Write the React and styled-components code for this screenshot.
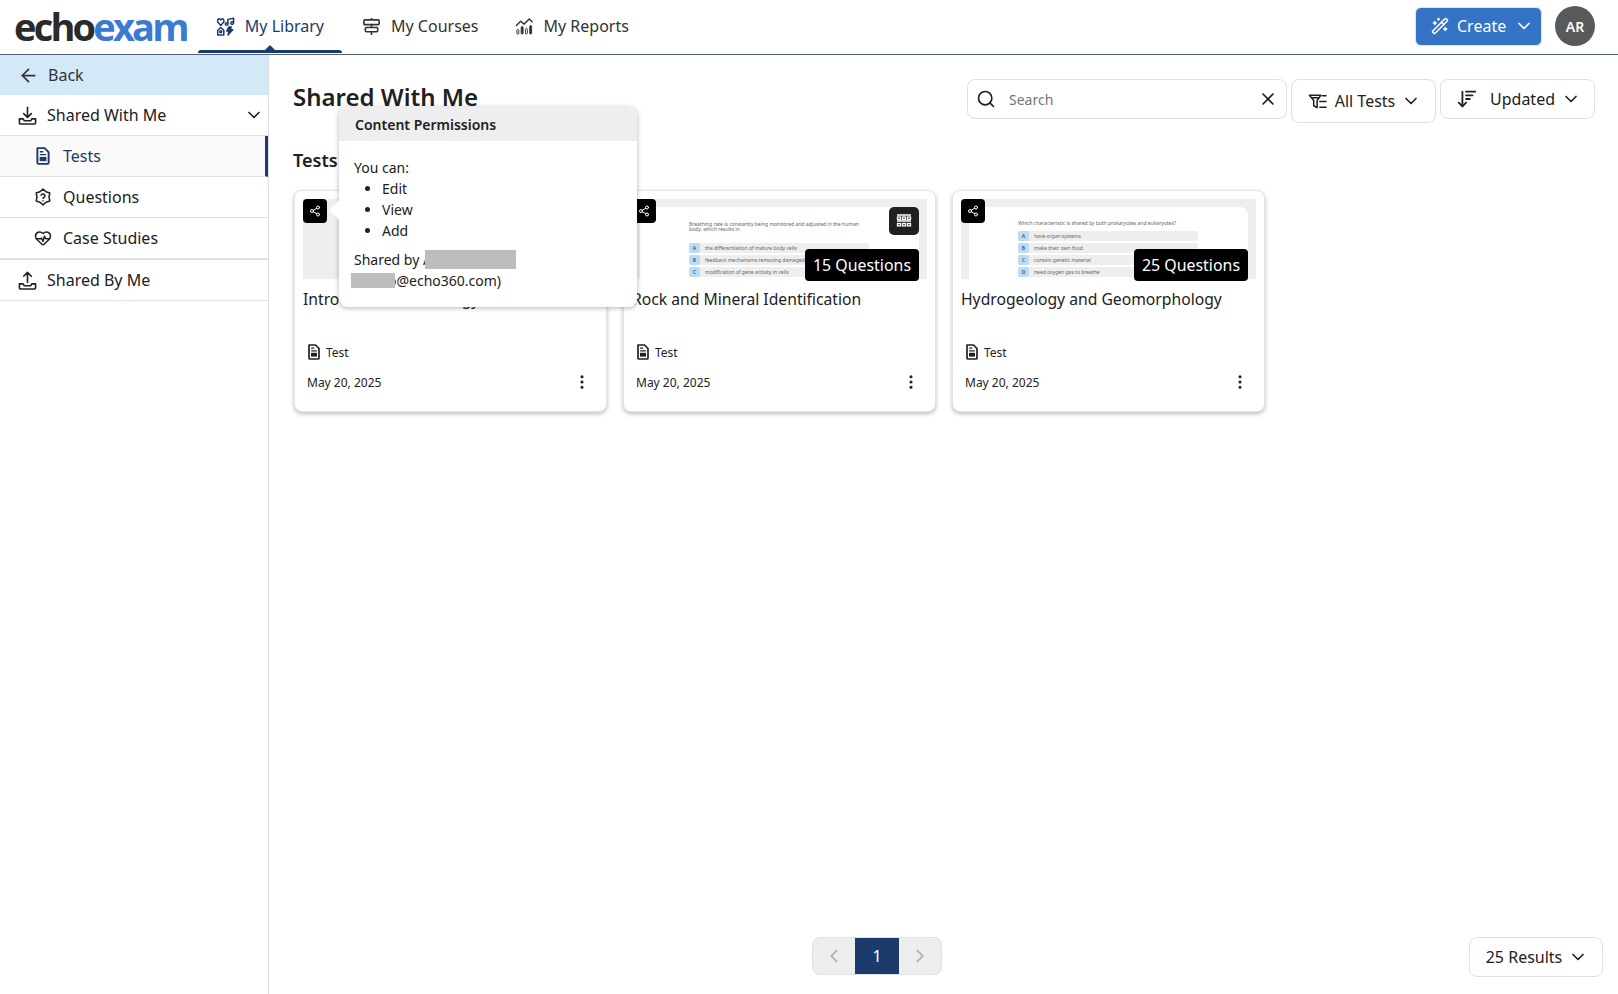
import React from "react";
import styled, { createGlobalStyle } from "styled-components";
import {
  ArrowLeft,
  ChevronDown,
  ChevronLeft,
  ChevronRight,
  Search,
  X,
  WandSparkles,
  ArrowDownWideNarrow,
  HeartPulse,
  Share2,
  EllipsisVertical,
} from "lucide-react";

const GlobalStyle = createGlobalStyle`
  html, body {
    margin: 0;
    padding: 0;
    background: #fff;
    color: #212121;
    font-family: "Noto Sans", "Open Sans", sans-serif;
  }
  * { box-sizing: border-box; }
`;

const navy = "#1a3b6b";

// ---------------------- icons ----------------------
const LibraryIcon = () => (
  <svg width="19" height="19" viewBox="0 0 20 20" fill="none" stroke="currentColor" strokeWidth="1.6" strokeLinejoin="round" strokeLinecap="round">
    <path d="M5 9 2 5.6C.9 4 2.2 1.8 3.7 2c.6 0 1 .4 1.3.9.3-.5.8-.9 1.4-.9C8 1.8 9 4 8 5.6z" />
    <path d="M12.5 7V2.5l6-1.2V6" />
    <circle cx="11.2" cy="7.4" r="1.4" />
    <circle cx="17" cy="6.4" r="1.4" />
    <path d="M1.8 14 5 11l3.2 3v5H1.8z" />
    <circle cx="5" cy="15.6" r="1" />
    <path d="M16 10.5h-2.6l-2 4.2h2.4l-1.2 4.3 5-5.6h-2.6z" fill="currentColor" />
  </svg>
);

const CoursesIcon = () => (
  <svg width="19" height="19" viewBox="0 0 20 20" fill="none" stroke="currentColor" strokeWidth="1.7" strokeLinejoin="round">
    <rect x="2" y="3" width="16" height="5" rx="1" />
    <rect x="3.5" y="11" width="13" height="4.5" rx="1" />
    <path d="M10 1v2M10 8v3M10 15.5V19" />
  </svg>
);

const ReportsIcon = () => (
  <svg width="19" height="19" viewBox="0 0 20 20" fill="currentColor" stroke="currentColor" strokeWidth="1" strokeLinejoin="round">
    <path d="M1.5 9 6 4.5l3.5 3L15 2l3 3" fill="none" strokeWidth="1.5" strokeLinecap="round" />
    <rect x="2" y="13" width="2" height="5" rx="1" fill="none" />
    <rect x="6.5" y="10" width="2" height="8" rx="1" />
    <rect x="11" y="12" width="2" height="6" rx="1" fill="none" />
    <rect x="15.5" y="9" width="2" height="9" rx="1" />
  </svg>
);

const FilterListIcon = () => (
  <svg width="19" height="19" viewBox="0 0 20 20" fill="none" stroke="currentColor" strokeWidth="1.6" strokeLinejoin="round" strokeLinecap="round">
    <path d="M1.5 3.5h12L9.6 9v7.5L6 14.5V9zM4 6h7" />
    <path d="M15 4h4M12.5 10H19M12.5 16H19" />
  </svg>
);

const TrayDownIcon = () => (
  <svg width="19" height="19" viewBox="0 0 20 20" fill="none" stroke="currentColor" strokeWidth="1.7" strokeLinejoin="round" strokeLinecap="round">
    <path d="M10 1.5v10M6 8l4 4 4-4" />
    <path d="M1.5 13.5h4l1 2h7l1-2h4V18a1 1 0 0 1-1 1h-15a1 1 0 0 1-1-1z" />
  </svg>
);

const TrayUpIcon = () => (
  <svg width="19" height="19" viewBox="0 0 20 20" fill="none" stroke="currentColor" strokeWidth="1.7" strokeLinejoin="round" strokeLinecap="round">
    <path d="M10 12V1.5M6 5.5l4-4 4 4" />
    <path d="M1.5 13.5h4l1 2h7l1-2h4V18a1 1 0 0 1-1 1h-15a1 1 0 0 1-1-1z" />
  </svg>
);

const DocIcon = ({ size = 16 }) => (
  <svg width={size} height={size} viewBox="0 0 16 16" fill="none" stroke="currentColor" strokeWidth="1.7" strokeLinejoin="round">
    <path d="M3 1h6.5L13 4.5V14a1 1 0 0 1-1 1H4a1 1 0 0 1-1-1z" />
    <path d="M5.2 4.2h3M5.2 6.8h5.6" strokeWidth="1.2" />
    <rect x="5" y="8.8" width="6" height="3.8" fill="currentColor" stroke="none" />
  </svg>
);

const QuestionBadgeIcon = () => (
  <svg width="18" height="18" viewBox="0 0 24 24" fill="none" stroke="currentColor" strokeWidth="2" strokeLinecap="round" strokeLinejoin="round">
    <path d="M12 1.5 16 5.07l5.09 1.68L20 12l1.09 5.25L16 18.93 12 22.5l-4-3.57-5.09-1.68L4 12 2.91 6.75 8 5.07z" />
    <path d="M9.4 9.6a2.7 2.7 0 0 1 5.2.9c0 1.8-2.6 2.2-2.6 3.4" />
    <path d="M12 17h.01" />
  </svg>
);

const AbacusIcon = () => (
  <svg width="16" height="16" viewBox="0 0 16 16" fill="none" stroke="#fff" strokeWidth="1.3">
    <path d="M1 2h14M1 8h14" />
    <rect x="1.5" y="4" width="3" height="2.4" />
    <rect x="6.5" y="4" width="3" height="2.4" />
    <rect x="11.5" y="4" width="3" height="2.4" />
    <rect x="1.5" y="10.5" width="3" height="2.4" />
    <rect x="6.5" y="10.5" width="3" height="2.4" />
    <rect x="11.5" y="10.5" width="3" height="2.4" />
  </svg>
);

// ---------------------- header ----------------------
const Page = styled.div`
  display: flex;
  flex-direction: column;
  height: 100vh;
  overflow: hidden;
`;

const Header = styled.header`
  display: flex;
  align-items: center;
  flex: none;
  height: 55px;
  padding: 0 23px 2px 14px;
  border-bottom: 1px solid #4d607f;
`;

const Logo = styled.div`
  flex: none;
  margin-right: 11px;
  font-family: "Open Sans", sans-serif;
  font-size: 38px;
  font-weight: 700;
  letter-spacing: -2.8px;
  line-height: 52px;
  color: #2b2a2b;
  white-space: nowrap;

  span {
    color: #3b7ad2;
  }
`;

const Tab = styled.a`
  position: relative;
  display: flex;
  align-items: center;
  gap: 10px;
  height: 52px;
  margin-right: ${(p) => (p.$active ? "2px" : "0")};
  padding: 0 18px;
  font-size: 16px;
  color: ${(p) => (p.$active ? navy : "#333")};

  ${(p) =>
    p.$active &&
    `
    &::after {
      content: "";
      position: absolute;
      left: 0;
      right: 0;
      bottom: -1px;
      height: 3px;
      border-radius: 3px 3px 0 0;
      background: ${navy};
    }
    &::before {
      content: "";
      position: absolute;
      left: 50%;
      bottom: 1px;
      margin-left: -6px;
      border: 6px solid transparent;
      border-top: 0;
      border-bottom-color: ${navy};
    }
  `}
`;

const HeaderRight = styled.div`
  display: flex;
  align-items: center;
  gap: 13px;
  margin-left: auto;
`;

const CreateButton = styled.button`
  display: flex;
  align-items: center;
  gap: 8px;
  width: 127px;
  height: 39px;
  padding: 0 0 0 15px;
  border: 1px solid #dbe6f5;
  border-radius: 6px;
  background: #3573c7;
  color: #fff;
  font: 16px "Noto Sans", sans-serif;
`;

const Avatar = styled.div`
  display: flex;
  align-items: center;
  justify-content: center;
  width: 40px;
  height: 40px;
  border-radius: 50%;
  background: #58595b;
  color: #fff;
  font-size: 14px;
  font-weight: 600;
`;

// ---------------------- sidebar ----------------------
const Body = styled.div`
  display: flex;
  flex: 1;
  min-height: 0;
`;

const Sidebar = styled.aside`
  flex: none;
  width: 269px;
  border-right: 1px solid #ddd;
`;

const BackRow = styled.div`
  display: flex;
  align-items: center;
  gap: 9px;
  height: 40px;
  padding-left: 18px;
  background: #d4e9f8;
  font-size: 16px;
  color: #333;
`;

const SideRow = styled.div`
  display: flex;
  align-items: center;
  gap: ${(p) => (p.$sub ? "11px" : "10px")};
  height: ${(p) => (p.$tall ? "42px" : "41px")};
  padding: 0 4px 0 ${(p) => (p.$sub ? "34px" : "18px")};
  border-bottom: ${(p) => (p.$tall ? "2px" : "1px")} solid #e0e0e0;
  font-size: 16px;
  color: ${(p) => (p.$active ? navy : "#212121")};
  background: ${(p) => (p.$active ? "#fafafa" : "#fff")};
  border-right: ${(p) => (p.$active ? `3px solid ${navy}` : "0")};

  svg:last-child:not(:first-child) {
    margin-left: auto;
  }
`;

// ---------------------- main ----------------------
const Main = styled.main`
  display: flex;
  flex-direction: column;
  flex: 1;
  min-width: 0;
`;

const TitleRow = styled.div`
  display: flex;
  align-items: flex-start;
  justify-content: space-between;
  padding: 24px 23px 0 24px;
`;

const Title = styled.h1`
  margin: 0;
  font-size: 24px;
  font-weight: 600;
  line-height: 36px;
`;

const Toolbar = styled.div`
  display: flex;
  align-items: flex-start;
  gap: 4px;
`;

const SearchBox = styled.div`
  display: flex;
  align-items: center;
  width: 320px;
  height: 40px;
  padding: 0 8px;
  border: 1px solid #e0e0e0;
  border-radius: 8px;
  font-size: 14px;
  color: #757575;

  span {
    margin-left: 13px;
  }
  svg:last-child {
    margin-left: auto;
    color: #212121;
  }
`;

const SelectButton = styled.button`
  display: flex;
  align-items: center;
  justify-content: center;
  gap: ${(p) => p.$gap || 8}px;
  width: ${(p) => p.$w}px;
  height: ${(p) => p.$h || 40}px;
  padding: 0 0 0 2px;
  border: 1px solid #e0e0e0;
  border-radius: 8px;
  background: #fff;
  color: #212121;
  font: 16px "Noto Sans", sans-serif;

  svg:last-child {
    margin-left: ${(p) => p.$pull || 0}px;
  }
`;

const SectionTitle = styled.h2`
  margin: 0;
  padding: 24px 0 0 24px;
  font-size: 18px;
  font-weight: 600;
  line-height: 26px;
`;

const CardGrid = styled.div`
  display: flex;
  gap: 16px;
  padding: 17px 0 0 25px;
`;

const Card = styled.article`
  position: relative;
  z-index: ${(p) => (p.$raised ? 5 : "auto")};
  display: flex;
  flex-direction: column;
  width: 313px;
  height: 222px;
  padding: 8px;
  border: 1px solid #e4e4e4;
  border-radius: 8px;
  background: #fff;
  box-shadow: 0 2px 4px rgba(0, 0, 0, 0.25);
`;

const Thumb = styled.div`
  position: relative;
  flex: none;
  height: 80px;
  padding: 8px 8px 0;
  background: #eee;
`;

const Slide = styled.div`
  height: 72px;
  padding: ${(p) => (p.$two ? "15px" : "14px")} 0 0 49px;
  border-radius: 8px 8px 0 0;
  background: #fff;
  overflow: hidden;
  font-size: 5px;
  line-height: 5px;
  color: #666;
`;

const SlideText = styled.div`
  width: 180px;
  margin-bottom: ${(p) => (p.$two ? "11px" : "5px")};
`;

const SlideOption = styled.div`
  display: flex;
  align-items: center;
  gap: 5px;
  width: 180px;
  height: 10px;
  margin-bottom: 2px;
  border-radius: 2px;
  background: #eee;

  b {
    display: flex;
    align-items: center;
    justify-content: center;
    width: 11px;
    height: 10px;
    border-radius: 2px;
    background: #bcdcf6;
    font-weight: 600;
    color: #33587f;
  }
`;

const ShareBadge = styled.div`
  position: absolute;
  left: 0;
  top: 0;
  display: flex;
  align-items: center;
  justify-content: center;
  width: 24px;
  height: 24px;
  border-radius: 4px;
  background: #000;
  color: #fff;
`;

const CountBadge = styled.div`
  position: absolute;
  right: 8px;
  bottom: -2px;
  height: 32px;
  padding: 0 8px;
  border-radius: 4px;
  background: #000;
  color: #fff;
  font-size: 15.9px;
  line-height: 32px;
  white-space: nowrap;
`;

const ToolBadge = styled.div`
  position: absolute;
  right: 8px;
  top: 8px;
  display: flex;
  align-items: center;
  justify-content: center;
  width: 30px;
  height: 28px;
  border-radius: 5px;
  background: #231f20;
`;

const CardTitle = styled.div`
  flex: 1;
  padding-top: 8px;
  font-size: 15.7px;
  line-height: 24px;
  color: #212121;
`;

const TypeRow = styled.div`
  display: flex;
  align-items: center;
  gap: 4px;
  height: 18px;
  padding-left: 3px;
  font-size: 12px;
`;

const DateRow = styled.div`
  display: flex;
  align-items: center;
  justify-content: space-between;
  height: 24px;
  margin: 9px 0 9px;
  padding: 0 7px 0 4px;
  font-size: 12px;
`;

// ---------------------- permissions popover ----------------------
const Popover = styled.div`
  position: absolute;
  left: 44px;
  top: -84px;
  width: 298px;
  height: 200px;
  border-radius: 8px;
  background: #fff;
  box-shadow: 0 1px 5px rgba(0, 0, 0, 0.3);
  font-size: 14px;
  line-height: 21px;

  &::before {
    content: "";
    position: absolute;
    left: -10px;
    top: 93px;
    border: 10px solid transparent;
    border-left: 0;
    border-right-color: #fff;
  }
`;

const PopoverHead = styled.div`
  height: 34px;
  padding-left: 16px;
  border-radius: 8px 8px 0 0;
  background: #eee;
  font-weight: 600;
  line-height: 36px;
`;

const PopoverBody = styled.div`
  padding: 16px 15px;

  ul {
    margin: 0 0 8px;
    padding-left: 28px;
  }
`;

const SharedBy = styled.div`
  position: relative;
`;

const MailText = styled.span`
  margin-left: 34px;
`;

const Redacted = styled.span`
  position: absolute;
  left: ${(p) => p.$x}px;
  top: ${(p) => p.$y}px;
  width: ${(p) => p.$w}px;
  height: ${(p) => p.$h}px;
  background: #bdbdbd;
`;

// ---------------------- footer ----------------------
const Footer = styled.footer`
  display: flex;
  align-items: flex-start;
  justify-content: space-between;
  margin-top: auto;
  padding: 0 15px 17px 543px;
`;

const Pager = styled.div`
  display: flex;
  height: 38px;
  border: 1px solid #e0e0e0;
  border-radius: 8px;
  overflow: hidden;
  background: #eee;
`;

const PagerArrow = styled.div`
  display: flex;
  align-items: center;
  justify-content: center;
  width: 42px;
  color: #b5b5b5;
`;

const PagerCurrent = styled.div`
  display: flex;
  align-items: center;
  justify-content: center;
  width: 44px;
  background: ${navy};
  color: #fff;
  font-size: 16px;
`;

const Questions = ({ text, options, two }) => (
  <Slide $two={two}>
    <SlideText $two={two}>{text}</SlideText>
    {options.map(([letter, label]) => (
      <SlideOption key={letter}>
        <b>{letter}</b>
        {label}
      </SlideOption>
    ))}
  </Slide>
);

const TestCard = ({ title, count, raised, tool, slide, children }) => (
  <Card $raised={raised}>
    <Thumb>
      {slide}
      <ShareBadge>
        <Share2 size={12} />
      </ShareBadge>
      {tool && (
        <ToolBadge>
          <AbacusIcon />
        </ToolBadge>
      )}
      {count && <CountBadge>{count} Questions</CountBadge>}
    </Thumb>
    <CardTitle>{title}</CardTitle>
    <TypeRow>
      <DocIcon />
      Test
    </TypeRow>
    <DateRow>
      May 20, 2025
      <EllipsisVertical size={18} color="#212121" strokeWidth={2.2} />
    </DateRow>
    {children}
  </Card>
);

const App = () => {
  return (
    <Page>
      <GlobalStyle />
      <Header>
        <Logo>
          echo<span>exam</span>
        </Logo>
        <Tab $active>
          <LibraryIcon />
          My Library
        </Tab>
        <Tab>
          <CoursesIcon />
          My Courses
        </Tab>
        <Tab>
          <ReportsIcon />
          My Reports
        </Tab>
        <HeaderRight>
          <CreateButton>
            <WandSparkles size={18} />
            Create
            <ChevronDown size={20} />
          </CreateButton>
          <Avatar>AR</Avatar>
        </HeaderRight>
      </Header>

      <Body>
        <Sidebar>
          <BackRow>
            <ArrowLeft size={21} />
            Back
          </BackRow>
          <SideRow>
            <TrayDownIcon />
            Shared With Me
            <ChevronDown size={20} />
          </SideRow>
          <SideRow $sub $active>
            <DocIcon size={18} />
            Tests
          </SideRow>
          <SideRow $sub>
            <QuestionBadgeIcon />
            Questions
          </SideRow>
          <SideRow $sub $tall>
            <HeartPulse size={18} />
            Case Studies
          </SideRow>
          <SideRow>
            <TrayUpIcon />
            Shared By Me
          </SideRow>
        </Sidebar>

        <Main>
          <TitleRow>
            <Title>Shared With Me</Title>
            <Toolbar>
              <SearchBox>
                <Search size={20} color="#212121" />
                <span>Search</span>
                <X size={20} />
              </SearchBox>
              <SelectButton $w={145} $h={44} $pull={-2}>
                <FilterListIcon />
                All Tests
                <ChevronDown size={20} />
              </SelectButton>
              <SelectButton $w={155} $gap={12} $pull={-6}>
                <ArrowDownWideNarrow size={22} />
                Updated
                <ChevronDown size={20} />
              </SelectButton>
            </Toolbar>
          </TitleRow>

          <SectionTitle>Tests</SectionTitle>

          <CardGrid>
            <TestCard title="Introduction to Geology" raised>
              <Popover>
                <PopoverHead>Content Permissions</PopoverHead>
                <PopoverBody>
                  You can:
                  <ul>
                    <li>Edit</li>
                    <li>View</li>
                    <li>Add</li>
                  </ul>
                  <SharedBy>
                    Shared by A
                    <Redacted $x={71} $y={1} $w={91} $h={19} />
                    <br />
                    <MailText>o@echo360.com)</MailText>
                    <Redacted $x={-3} $y={24} $w={44} $h={15} />
                  </SharedBy>
                </PopoverBody>
              </Popover>
            </TestCard>
            <TestCard
              title="Rock and Mineral Identification"
              count={15}
              tool
              slide={
                <Questions
                  two
                  text="Breathing rate is constantly being monitored and adjusted in the human body, which results in"
                  options={[
                    ["A", "the differentiation of mature body cells"],
                    ["B", "feedback mechanisms removing damaged cells"],
                    ["C", "modification of gene activity in cells"],
                  ]}
                />
              }
            />
            <TestCard
              title="Hydrogeology and Geomorphology"
              count={25}
              slide={
                <Questions
                  text="Which characteristic is shared by both prokaryotes and eukaryotes?"
                  options={[
                    ["A", "have organ systems"],
                    ["B", "make their own food"],
                    ["C", "contain genetic material"],
                    ["D", "need oxygen gas to breathe"],
                  ]}
                />
              }
            />
          </CardGrid>

          <Footer>
            <Pager>
              <PagerArrow>
                <ChevronLeft size={22} />
              </PagerArrow>
              <PagerCurrent>1</PagerCurrent>
              <PagerArrow>
                <ChevronRight size={22} />
              </PagerArrow>
            </Pager>
            <SelectButton $w={134} $pull={-2}>
              25 Results
              <ChevronDown size={20} />
            </SelectButton>
          </Footer>
        </Main>
      </Body>
    </Page>
  );
};

export default App;
